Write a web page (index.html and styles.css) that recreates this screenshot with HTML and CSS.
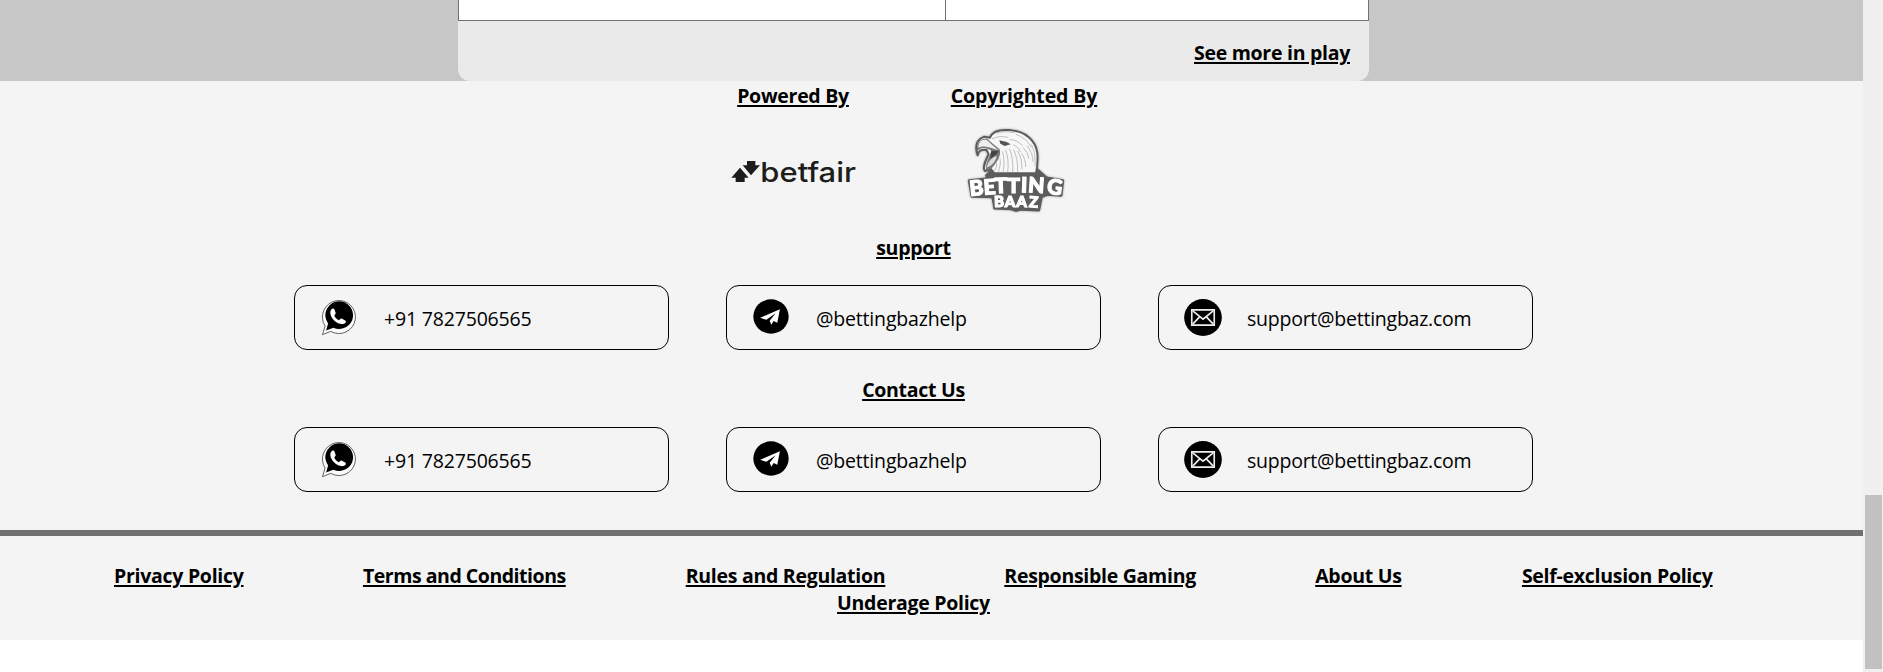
FILE: index.html
```html
<!DOCTYPE html>
<html lang="en">
<head>
<meta charset="utf-8">
<title>Betting Baaz</title>
<link rel="stylesheet" href="styles.css">
</head>
<body>
<svg class="defs" width="0" height="0" aria-hidden="true">
  <symbol id="whatsapp" viewBox="0 0 108 112">
    <path d="M7 108L15 82A50 50 0 1 1 32 98Z" fill="#fff" fill-opacity=".5" stroke="#444" stroke-width="2.5"/>
    <path d="M18 95L24 74A42 42 0 1 1 40 87Z" fill="#000"/>
    <path d="M38 29C31 32 29 40 32 49C38 64 50 74 65 76C74 77 80 71 77 66L65 59C61 58 59 64 56 64C50 61 45 56 43 51C43 47 48 45 47 42L43 31C42 28 40 28 38 29Z" fill="#fff"/>
  </symbol>
  <symbol id="telegram" viewBox="0 0 108 106">
    <ellipse cx="54" cy="53" rx="53.5" ry="52"/>
    <path d="M21 57L81 31L73 72L62 67L55 78L50 66L68 43L40 63Z" fill="#fff"/>
  </symbol>
  <symbol id="mail" viewBox="0 0 114 112">
    <ellipse cx="57" cy="56" rx="57" ry="56"/>
    <g fill="none" stroke="#eee" stroke-width="5"><path d="M23 33H91V79H23Z"/><path d="M26 36L57 61L88 36M26 76L46 55M88 76L68 55"/></g>
  </symbol>
</svg>
<div class="window">
  <main class="page">
    <section class="band">
      <div class="panel">
        <div class="market"><div class="market-main"></div><div class="market-odds"></div></div>
        <div class="more"><a class="link see">See more in play</a></div>
      </div>
    </section>
    <section class="info">
      <div class="credits">
        <div class="credit">
          <a class="link powered">Powered By</a>
          <svg class="logo" viewBox="-6 0 450 360">
            <g fill="#1d1d1b">
              <path d="M60 173L86 203H74V216H47V203H34Z"/><path d="M81 153H106V166H120L93 196L68 166H81Z"/>
              <text class="betfair" x="121" y="215" textLength="287" lengthAdjust="spacingAndGlyphs">betfair</text>
            </g>
          </svg>
        </div>
        <div class="credit">
          <a class="link copyrighted">Copyrighted By</a>
          <svg class="logo eagle" viewBox="29 0 450 360">
            <path d="M137 196L155 176L290 170L324 200L310 255L298 290L250 300L230 306L205 297L165 296Z" fill="#5c5c5c"/>
            <path d="M115 136C106 110 110 90 135 80L152 83C158 65 180 58 209 60C260 64 290 92 294 130C296 155 294 172 290 190L165 190L155 177L137 183C130 178 136 156 148 133L142 120C124 116 117 124 115 136Z" fill="#f7f7f7" stroke="#5c5c5c" stroke-width="6" stroke-linejoin="round"/>
            <path d="M113 126C110 101 125 82 145 87L158 99L181 118C186 135 176 155 155 177L140 181C138 165 145 148 157 123C137 110 121 112 113 126Z" fill="#777"/>
            <path d="M117 113C117 97 128 85 144 91L158 104L177 120C160 118 139 103 117 113Z" fill="#eee"/>
            <path d="M142 173C145 155 155 144 172 137C170 154 158 166 142 173Z" fill="#ddd"/>
            <path d="M155 124L177 122L173 131L153 146Z" fill="#444"/>
            <path d="M180 91L202 96L214 103L196 108L183 101Z" fill="#555"/>
            <g fill="none" stroke="#aaa" stroke-width="2.2" stroke-linecap="round">
              <path d="M159 87Q177 75 205 82M172 70Q193 61 223 68M213 88Q235 91 249 106M230 73Q259 83 276 111M223 104Q238 112 244 125M252 113Q267 127 269 146M264 108Q281 128 281 155M277 105Q290 130 287 168M247 130Q259 147 259 170M235 123Q248 143 248 177M223 120Q236 145 235 184M211 117Q223 145 220 186M199 120Q210 148 205 187M190 125Q198 153 191 187M182 146Q186 162 177 185M171 159Q176 168 166 182"/>
            </g>
            <path class="plate" d="M90 212L140 207L180 200L300 200L326 205L370 212L365 256L324 253L306 260L298 300L166 294L162 260L98 259Z"/>
            <text class="betting" x="93 134 166 204 244 265 321" y="258 254 250 248 247 246 250" rotate="-6 -4 -2 0 2 4 8">BETTING</text>
            <text class="baaz" x="165 196 231 268" y="291 290 290 291" rotate="-2 0 2 4">BAAZ</text>
          </svg>
        </div>
      </div>
      <h2 class="heading"><a class="link">support</a></h2>
      <div class="cards">
        <div class="card"><svg class="icon whatsapp"><use href="#whatsapp"/></svg><span class="value">+91 7827506565</span></div>
        <div class="card"><svg class="icon telegram"><use href="#telegram"/></svg><span class="value">@bettingbazhelp</span></div>
        <div class="card"><svg class="icon mail"><use href="#mail"/></svg><span class="value email">support@bettingbaz.com</span></div>
      </div>
      <h2 class="heading"><a class="link">Contact Us</a></h2>
      <div class="cards">
        <div class="card"><svg class="icon whatsapp"><use href="#whatsapp"/></svg><span class="value">+91 7827506565</span></div>
        <div class="card"><svg class="icon telegram"><use href="#telegram"/></svg><span class="value">@bettingbazhelp</span></div>
        <div class="card"><svg class="icon mail"><use href="#mail"/></svg><span class="value email">support@bettingbaz.com</span></div>
      </div>
    </section>
    <footer class="footer">
      <a class="link privacy">Privacy Policy</a>
      <a class="link terms">Terms and Conditions</a>
      <a class="link rules">Rules and Regulation</a>
      <a class="link gaming">Responsible Gaming</a>
      <a class="link about">About Us</a>
      <a class="link exclusion">Self-exclusion Policy</a>
      <a class="link underage">Underage Policy</a>
    </footer>
  </main>
  <div class="scrollbar"><div class="thumb"></div></div>
</div>
</body>
</html>
```
FILE: styles.css
```css
* { box-sizing: border-box; }
body { margin: 0; background: #fff; color: #000; font: 19.5px/27px "Open Sans", sans-serif; overflow: hidden; }
.defs { position: absolute; }
.window { display: flex; height: 672px; }
.page { flex: 1; min-width: 0; }
.band { height: 81px; background: #c7c7c7; padding-left: 458px; }
.panel { width: 911px; height: 81px; background: #eaeaea; border-radius: 0 0 12px 12px; }
.market { display: flex; height: 21px; background: #fff; border: 1px solid #707070; border-top: 0; }
.market-main { width: 487px; border-right: 1px solid #707070; }
.more { display: flex; justify-content: flex-end; padding: 18px 19px 0 0; }

.link { font-weight: 700; letter-spacing: -0.28px; white-space: nowrap; text-decoration: underline; text-decoration-thickness: 2px; text-underline-offset: 2px; }
.copyrighted { letter-spacing: -0.12px; }

.info { height: 449px; background: #f4f4f4; }
.credits { display: flex; gap: 81px; padding-left: 718px; height: 153px; }
.credit { width: 150px; display: flex; flex-direction: column; align-items: center; padding-top: 1px; }
.logo { width: 150px; height: 120px; flex: none; margin-top: 1px; }
.betfair { font: 500 83px Inter, sans-serif; font-variant-ligatures: none; }
.eagle { filter: blur(.4px) drop-shadow(0 0 1px #999); }
.plate { fill: #5c5c5c; stroke: #5c5c5c; stroke-width: 9px; stroke-linejoin: round; }
.betting, .baaz { font: 900 63px Lato, sans-serif; fill: #fff; stroke: #fff; stroke-width: 3.5px; }
.baaz { font-size: 45px; }

.heading { display: flex; justify-content: center; width: 1827px; height: 27px; margin: 0; font-size: inherit; }
.cards { display: flex; gap: 57px; padding: 24px 0 0 294px; height: 115px; }
.card { width: 375px; height: 65px; flex: none; display: flex; align-items: flex-start; border: 1px solid #000; border-radius: 13px; padding: 13px 0 0 26px; }
.icon { flex: none; }
.whatsapp { width: 36px; height: 37px; margin: 0 28px 0 -1px; }
.telegram { width: 36px; height: 35px; margin-right: 27px; }
.mail { width: 38px; height: 37px; margin: 0 25px 0 -1px; }
.value { white-space: nowrap; padding-top: 6px; letter-spacing: -0.18px; }
.email { letter-spacing: -0.24px; }

.footer { height: 110px; background: #f4f4f4; border-top: 6px solid #707070; padding: 26px 36px 0 0; display: flex; flex-wrap: wrap; justify-content: center; align-content: flex-start; column-gap: 119.6px; }
.footer .link { text-align: center; }
.privacy { width: 129px; }
.terms { width: 203.5px; letter-spacing: -0.47px; }
.rules { width: 199px; }
.gaming { width: 191px; }
.about { width: 87px; }
.exclusion { width: 191.5px; }
.underage { width: 153px; }

.scrollbar { width: 20px; background: #f0f0f0; padding: 495px 1px 0 2px; }
.thumb { height: 174px; background: #c1c1c1; }
```
